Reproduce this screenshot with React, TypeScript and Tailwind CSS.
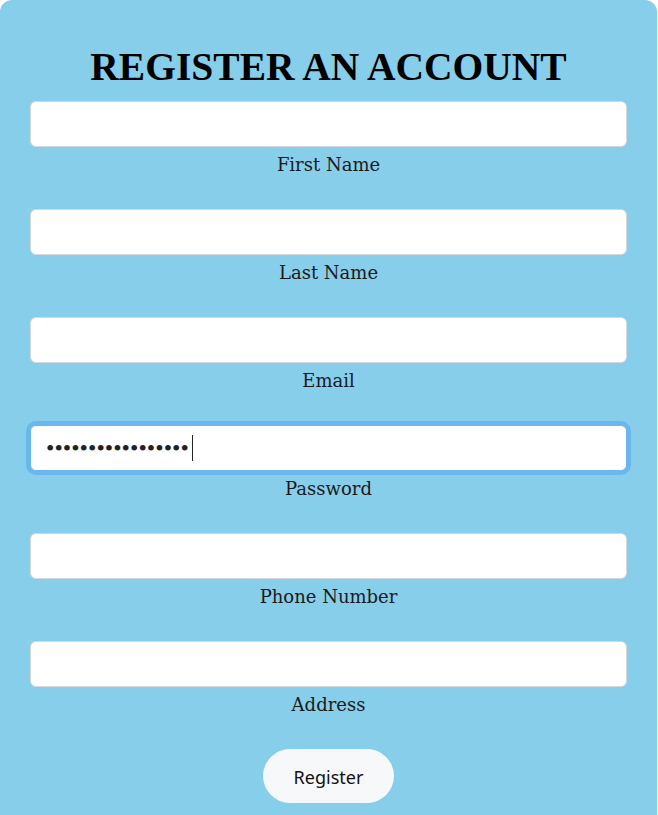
import { useState } from "react";

const FIELDS = [
  { id: "firstName", label: "First Name", type: "text" },
  { id: "lastName", label: "Last Name", type: "text" },
  { id: "email", label: "Email", type: "email" },
  { id: "password", label: "Password", type: "password" },
  { id: "phone", label: "Phone Number", type: "tel" },
  { id: "address", label: "Address", type: "text" },
];

export default function App() {
  const [form, setForm] = useState<Record<string, string>>({
    firstName: "",
    lastName: "",
    email: "",
    password: "supersecretpass12",
    phone: "",
    address: "",
  });

  const handleChange = (e: React.ChangeEvent<HTMLInputElement>) => {
    const { name, value } = e.target;
    setForm((prev) => ({ ...prev, [name]: value }));
  };

  return (
    <div className="min-h-screen bg-white">
      <form
        onSubmit={(e) => e.preventDefault()}
        className="w-[657px] rounded-t-xl bg-[#87ceeb] px-[30px] pt-[43px] pb-[12px]"
        style={{ fontFamily: "'Liberation Serif', serif" }}
      >
        <h1 className="mb-[10px] text-center text-[39.5px] font-bold leading-[48px] text-black">
          REGISTER AN ACCOUNT
        </h1>

        <div className="flex flex-col gap-[31px]">
          {FIELDS.map((f) => {
            const focused = f.id === "password";
            return (
              <div key={f.id} className="flex flex-col">
                <div className="relative">
                  <input
                    id={f.id}
                    name={f.id}
                    type={f.type}
                    value={form[f.id]}
                    onChange={handleChange}
                    className={
                      focused
                        ? "h-[46px] w-full rounded-md border border-[#6cb6f0] bg-white px-[15px] text-[24px] text-[#222] caret-transparent outline-none ring-4 ring-[#6cb6f0]"
                        : "h-[46px] w-full rounded-md border border-[#d4d8dc] bg-white px-[16px] text-[18px] text-[#222] outline-none"
                    }
                  />
                  {focused && (
                    <span className="pointer-events-none absolute left-[162px] top-[10px] h-[26px] w-px bg-[#222]" />
                  )}
                </div>
                <label
                  htmlFor={f.id}
                  className="h-[31px] pt-[4px] text-center text-[18px] leading-[28px] text-[#1a1a1a]"
                  style={{ fontFamily: "'DejaVu Serif', serif" }}
                >
                  {f.label}
                </label>
              </div>
            );
          })}
        </div>

        <div className="mt-[31px] flex justify-center">
          <button
            type="submit"
            className="h-[54px] w-[131px] rounded-full bg-[#f7f8fa] pt-[3px] text-[18px] text-[#111]"
            style={{ fontFamily: "'Noto Sans', sans-serif" }}
          >
            Register
          </button>
        </div>
      </form>
    </div>
  );
}
